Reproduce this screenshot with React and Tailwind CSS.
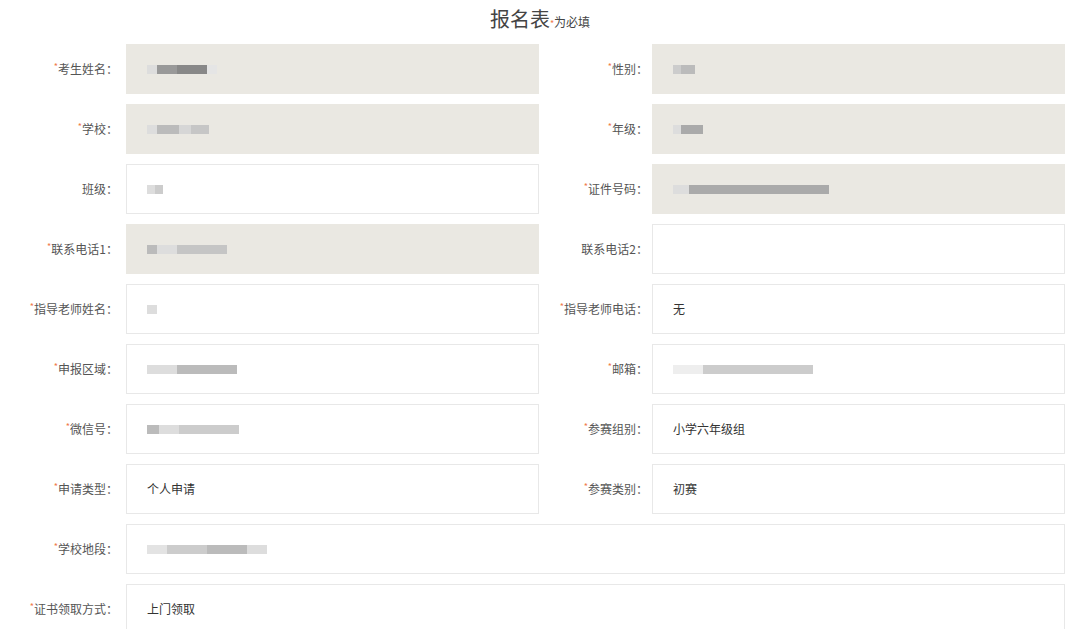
const F = { fontFamily: '"Microsoft YaHei","Noto Sans CJK SC",sans-serif' };

function Blur({ w = [20, 30], shades = ['#ddd', '#bbb', '#aaa'] }) {
  return (
    <div className="flex items-center">
      {w.map((x, i) => (
        <div key={i} style={{ width: x, background: shades[i % shades.length] }} className="h-[9px]" />
      ))}
    </div>
  );
}

function Label({ text, req, w }) {
  return (
    <div className={`${w} shrink-0 text-right text-[12px] text-[#555]`}>
      {req && <span className="text-[#f07a4a] text-[9px] align-top">*</span>}
      {text}：
    </div>
  );
}

function Input({ filled, children, w }) {
  return (
    <div className={`${w} h-[50px] flex items-center pl-[20px] text-[12px] text-[#333] border ${filled ? 'bg-[#eae8e2] border-[#eae8e2]' : 'bg-white border-[#e8e8e8]'}`}>
      {children}
    </div>
  );
}

function Cell({ label, req, filled, children, lw, side }) {
  return (
    <div className="flex items-center w-[540px]">
      <Label text={label} req={req} w={lw} />
      <div className={side === 'l' ? 'ml-[8px]' : 'ml-[4px]'}>
        <Input filled={filled} w="w-[413px]">{children}</Input>
      </div>
    </div>
  );
}

const b = (w, s) => <Blur w={w} shades={s} />;

export default function App() {
  const rows = [
    [['考生姓名', true, true, b([10, 20, 30, 10], ['#ddd', '#999', '#888', '#e5e5e5'])], ['性别', true, true, b([8, 14], ['#ccc', '#bbb'])]],
    [['学校', true, true, b([10, 22, 12, 18], ['#ddd', '#bbb', '#d6d6d6', '#c6c6c6'])], ['年级', true, true, b([8, 22], ['#ddd', '#aaa'])]],
    [['班级', false, false, b([8, 8], ['#ddd', '#ccc'])], ['证件号码', true, true, b([16, 140], ['#ddd', '#aaa'])]],
    [['联系电话1', true, true, b([10, 20, 50], ['#bbb', '#ddd', '#c5c5c5'])], ['联系电话2', false, false, null]],
    [['指导老师姓名', true, false, b([10], ['#ddd'])], ['指导老师电话', true, false, '无']],
    [['申报区域', true, false, b([30, 60], ['#ddd', '#bbb'])], ['邮箱', true, false, b([30, 110], ['#eee', '#ccc'])]],
    [['微信号', true, false, b([12, 20, 60], ['#bbb', '#ddd', '#ccc'])], ['参赛组别', true, false, '小学六年级组']],
    [['申请类型', true, false, '个人申请'], ['参赛类别', true, false, '初赛']],
  ];
  return (
    <div style={F} className="w-[1080px] h-[629px] bg-white overflow-hidden">
      <div className="h-[44px] flex items-center justify-center pb-[6px]">
        <span className="text-[20px] text-[#444]">报名表</span>
        <span className="text-[12px] text-[#444] mt-[6px]"><span className="text-[#f07a4a] text-[9px]">*</span>为必填</span>
      </div>
      <div className="flex flex-col gap-[10px]">
        {rows.map((r, i) => (
          <div key={i} className="flex">
            <Cell label={r[0][0]} req={r[0][1]} filled={r[0][2]} lw="w-[118px]" side="l">{r[0][3]}</Cell>
            <Cell label={r[1][0]} req={r[1][1]} filled={r[1][2]} lw="w-[108px]" side="r">{r[1][3]}</Cell>
          </div>
        ))}
        {[['学校地段', b([20, 40, 40, 20], ['#e3e3e3', '#ccc', '#bbb', '#ddd'])], ['证书领取方式', '上门领取']].map(([l, v], i) => (
          <div key={i} className="flex items-center">
            <Label text={l} req w="w-[118px]" />
            <div className="ml-[8px]"><Input w="w-[939px]">{v}</Input></div>
          </div>
        ))}
      </div>
    </div>
  );
}
